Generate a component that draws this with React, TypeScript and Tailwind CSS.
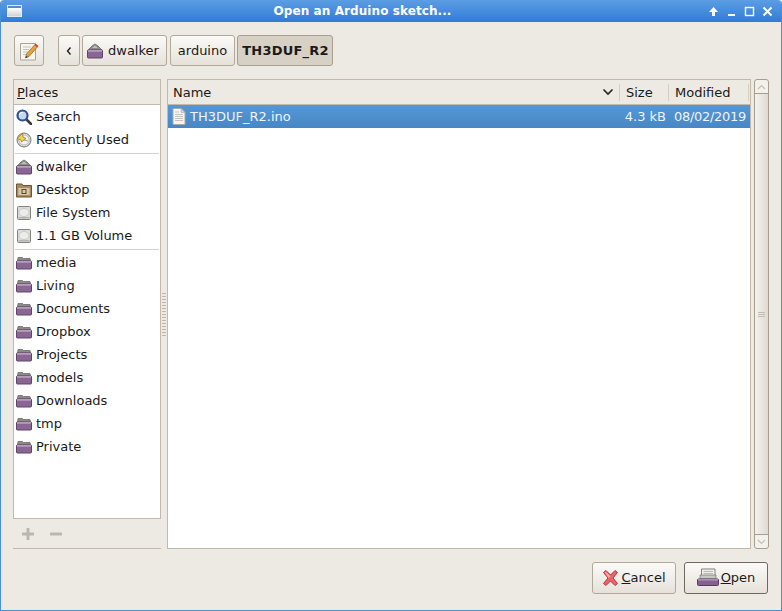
import React from 'react';

const FolderIcon = () => (
  <svg width="16" height="16" viewBox="0 0 16 16" className="shrink-0">
    <path d="M1.5 6 L2 2.5 H6.5 L7.5 3.5 H14 L14.5 6 Z" fill="#8c8a85" stroke="#6f6d69" strokeWidth="0.8" />
    <rect x="0.5" y="6" width="15" height="8" rx="0.8" fill="#8a6692" stroke="#5f4468" />
    <rect x="1" y="6" width="14" height="1.8" fill="#b79abd" />
  </svg>
);

const HomeIcon = () => (
  <svg width="16" height="16" viewBox="0 0 16 16" className="shrink-0">
    <path d="M1 7 L5 3 L8 1 L11 3 L15 7 Z" fill="#8b8a86" stroke="#6a6966" strokeWidth="0.8" />
    <path d="M5 5 L8 2.6 L11 5 Z" fill="#c2c1bc" />
    <rect x="0.5" y="7" width="15" height="8" rx="0.8" fill="#8a6692" stroke="#5f4468" />
    <rect x="1" y="7" width="14" height="1.8" fill="#b79abd" />
  </svg>
);

const SearchIcon = () => (
  <svg width="16" height="16" viewBox="0 0 16 16" className="shrink-0">
    <path d="M10 10 L15 15" stroke="#3a3a3a" strokeWidth="2.6" strokeLinecap="round" />
    <circle cx="6.5" cy="6.5" r="5" fill="#c9d6ec" stroke="#2f4f98" strokeWidth="2.2" />
    <path d="M3.5 6 A3 3 0 0 1 7 3.5" stroke="#ffffff" strokeWidth="1" fill="none" />
  </svg>
);

const RecentIcon = () => (
  <svg width="16" height="16" viewBox="0 0 16 16" className="shrink-0">
    <circle cx="8" cy="8" r="7" fill="#d8d7d0" stroke="#7c7b76" />
    <circle cx="8" cy="8" r="5" fill="#f4f3ef" stroke="#a9a8a2" strokeWidth="0.6" />
    <path d="M1 6.5 L6.5 1.5 L7 5 L10 6.5 L5.5 10 L5 8 Z" fill="#f0d24e" stroke="#8a7420" strokeWidth="0.7" />
    <path d="M8 8 L12 9" stroke="#8a8984" strokeWidth="0.8" />
  </svg>
);

const DesktopIcon = () => (
  <svg width="16" height="16" viewBox="0 0 16 16" className="shrink-0">
    <path d="M0.5 2 H6 L7 3.5 H15.5 V15 H0.5 Z" fill="#a98a60" stroke="#6d5433" />
    <rect x="2" y="5.5" width="12" height="8" fill="#d9c6a6" stroke="#9a7d55" strokeWidth="0.6" />
    <rect x="6" y="7.5" width="4" height="4" fill="none" stroke="#5f4a2c" strokeWidth="1" />
  </svg>
);

const DriveIcon = () => (
  <svg width="16" height="16" viewBox="0 0 16 16" className="shrink-0">
    <rect x="1.5" y="1.5" width="13" height="13" rx="1" fill="#d4d4d1" stroke="#85857f" />
    <rect x="2.5" y="2.5" width="11" height="11" fill="#dededb" />
    <ellipse cx="8" cy="7.5" rx="5" ry="4" fill="#ececea" stroke="#bcbcb8" strokeWidth="0.7" />
    <rect x="2.5" y="12" width="11" height="1.5" fill="#b4b4b0" />
  </svg>
);

const FileIcon = () => (
  <svg width="14" height="17" viewBox="0 0 14 17" className="shrink-0">
    <path d="M1 0.5 H9 L13 4.5 V16.5 H1 Z" fill="#f5f5f3" stroke="#a9a9a6" />
    <path d="M9 0.5 V4.5 H13 Z" fill="#d6d6d3" stroke="#a9a9a6" strokeWidth="0.6" />
    <path d="M3 4 H7 M3 6.5 H11 M3 8.5 H11 M3 10.5 H11 M3 12.5 H11" stroke="#c2c2bf" strokeWidth="1" />
  </svg>
);

const EditIcon = () => (
  <svg width="20" height="20" viewBox="0 0 20 20">
    <path d="M1.5 2.5 H16.5 V19 H1.5 Z" fill="#f7f6ee" stroke="#a5a49d" />
    <path d="M4 6 H12 M4 8.5 H10 M4 11 H9 M4 13.5 H8" stroke="#c3c2ba" strokeWidth="1" />
    <path d="M6.5 17 L7.5 13 L16 3.5 L18.5 5.8 L10 15.5 Z" fill="#e9a13b" stroke="#8e5f1a" strokeWidth="0.7" />
    <path d="M15.5 4 L16.5 2.5 L19.5 5 L18 6.3 Z" fill="#d5413a" />
    <path d="M6.5 17 L7.2 14.7 L8.7 16 Z" fill="#333" />
  </svg>
);

const CancelIcon = () => (
  <svg width="17" height="18" viewBox="0 0 17 18" className="shrink-0">
    <path
      d="M1.5 3.5 L4 1.5 L8.5 6 L13 1.5 L15.5 3.5 L11 9 L15.5 14.5 L13 16.5 L8.5 12 L4 16.5 L1.5 14.5 L6 9 Z"
      fill="#e8666a"
      stroke="#b8282e"
      strokeWidth="0.9"
    />
    <path d="M3 3.5 L4 2.8 L8.5 7.5 L6.5 9 Z" fill="#f4a9aa" />
  </svg>
);

const OpenIcon = () => (
  <svg width="22" height="19" viewBox="0 0 22 19" className="shrink-0">
    <path d="M4.5 1 H18 V10 H4.5 Z" fill="#f1f1ee" stroke="#7f7f7b" />
    <path d="M6.5 3.5 H16 M6.5 5.5 H16 M6.5 7.5 H16" stroke="#b8b8b4" strokeWidth="1" />
    <path d="M3 7 H19 V11 H3 Z" fill="#c7c7c3" stroke="#75756f" strokeWidth="0.7" />
    <rect x="0.5" y="11" width="21" height="6.5" rx="1" fill="#86608f" stroke="#553c60" />
    <rect x="1" y="11" width="20" height="1.6" fill="#ad91b3" />
  </svg>
);

const places: [React.ReactNode, string][][] = [
  [
    [<SearchIcon />, 'Search'],
    [<RecentIcon />, 'Recently Used'],
  ],
  [
    [<HomeIcon />, 'dwalker'],
    [<DesktopIcon />, 'Desktop'],
    [<DriveIcon />, 'File System'],
    [<DriveIcon />, '1.1 GB Volume'],
  ],
  [
    [<FolderIcon />, 'media'],
    [<FolderIcon />, 'Living'],
    [<FolderIcon />, 'Documents'],
    [<FolderIcon />, 'Dropbox'],
    [<FolderIcon />, 'Projects'],
    [<FolderIcon />, 'models'],
    [<FolderIcon />, 'Downloads'],
    [<FolderIcon />, 'tmp'],
    [<FolderIcon />, 'Private'],
  ],
];

const pathBtn =
  'h-[31px] flex items-center rounded-[3px] border border-[#b2a99a] bg-gradient-to-b from-[#fbfaf8] to-[#e6e2da]';

function App() {
  return (
    <div
      className="w-[782px] h-[611px] overflow-hidden flex flex-col border-x border-b border-[#4a90d9] rounded-t-[4px] bg-[#edeae3] text-[13px] leading-none text-[#1a1a1a]"
      style={{ fontFamily: '"DejaVu Sans", sans-serif' }}
    >
      {/* title bar */}
      <div className="h-[22px] shrink-0 -mx-px flex items-center bg-gradient-to-b from-[#5c9de3] to-[#2f7cd6] text-white">
        <div className="w-[15px] ml-[7px] h-[12px] flex flex-col border border-[#e4e9ee]">
          <div className="h-[2px] bg-[#5f86c4]" />
          <div className="flex-1 bg-gradient-to-b from-[#ffffff] to-[#cfd3d6]" />
        </div>
        <div className="flex-1 text-center font-bold text-[12px] tracking-[0.08px] pr-[5px]">Open an Arduino sketch...</div>
        <div className="flex items-center gap-[7px] mr-[9px]">
          <svg width="11" height="11" viewBox="0 0 11 11"><path d="M5.5 1 L10 6 H7 V10 H4 V6 H1 Z" fill="#fff" /></svg>
          <svg width="11" height="11" viewBox="0 0 11 11"><rect x="2" y="8" width="7" height="2" fill="#fff" /></svg>
          <svg width="11" height="11" viewBox="0 0 11 11"><rect x="1.5" y="1.5" width="8" height="8" fill="none" stroke="#fff" strokeWidth="1.4" /></svg>
          <svg width="11" height="11" viewBox="0 0 11 11"><path d="M1.5 1.5 L9.5 9.5 M9.5 1.5 L1.5 9.5" stroke="#fff" strokeWidth="2" /></svg>
        </div>
      </div>

      {/* path bar */}
      <div className="h-[57px] shrink-0 flex items-start pt-[13px] pl-[13px]">
        <div className={`${pathBtn} w-[30px] justify-center`}>
          <EditIcon />
        </div>
        <div className={`${pathBtn} w-[22px] justify-center ml-[14px]`}>
          <svg width="8" height="10" viewBox="0 0 8 10"><path d="M5.5 1.5 L2.5 5 L5.5 8.5" fill="none" stroke="#222" strokeWidth="1.4" /></svg>
        </div>
        <div className={`${pathBtn} w-[85px] ml-[2px] pl-[4px] gap-[5px]`}>
          <HomeIcon />
          <span>dwalker</span>
        </div>
        <div className={`${pathBtn} w-[65px] ml-[3px] justify-center`}>arduino</div>
        <div className="h-[31px] w-[96px] ml-[2px] pl-[1px] flex items-center justify-center rounded-[3px] border border-[#a89f90] bg-[#d6d0c5] font-bold tracking-[0.2px]">
          TH3DUF_R2
        </div>
      </div>

      {/* panes */}
      <div className="h-[470px] shrink-0 flex pl-[12px]">
        <div className="w-[148px] shrink-0 flex flex-col">
          <div className="h-[440px] flex flex-col border border-[#c3b9aa] bg-white">
            <div className="h-[25px] shrink-0 flex items-center pl-[3px] bg-[#edeae3] border-b border-[#c3b9aa]">
              <span><span className="underline">P</span>laces</span>
            </div>
            {places.map((group, i) => (
              <div key={i} className={i > 0 ? 'mt-[2px] border-t border-[#d8d2c8] mx-px pt-[1px]' : ''}>
                {group.map(([icon, label]) => (
                  <div key={label} className={`h-[23px] flex items-center gap-[4px] ${i > 0 ? 'pl-[1px]' : 'pl-[2px]'}`}>
                    {icon}
                    <span>{label}</span>
                  </div>
                ))}
              </div>
            ))}
          </div>
          <div className="h-[30px] flex items-center gap-[16px] pl-[9px] border-b border-[#c3b9aa]">
            <svg width="12" height="12" viewBox="0 0 12 12"><path d="M6 1 V11 M1 6 H11" stroke="#b9b7b2" strokeWidth="3" strokeLinecap="round" /></svg>
            <svg width="12" height="12" viewBox="0 0 12 12"><path d="M1 6 H11" stroke="#b9b7b2" strokeWidth="3" strokeLinecap="round" /></svg>
          </div>
        </div>

        {/* pane handle */}
        <div className="w-[6px] shrink-0 flex items-center justify-center">
          <div className="w-[4px] h-[44px] bg-[radial-gradient(#bdb6a9_0.7px,transparent_0.8px)] bg-[length:2px_3px]" />
        </div>

        <div className="w-[584px] shrink-0 flex flex-col border border-[#c3b9aa] bg-white">
          <div className="h-[25px] shrink-0 flex items-center bg-[#edeae3] border-b border-[#c3b9aa]">
            <div className="flex-1 h-[17px] flex items-center justify-between pl-[5px] pr-[5px] border-r border-[#d4cec3]">
              <span>Name</span>
              <svg width="12" height="10" viewBox="0 0 12 10"><path d="M1.5 2.5 L6 7 L10.5 2.5" fill="none" stroke="#222" strokeWidth="1.6" /></svg>
            </div>
            <div className="w-[49px] h-[17px] flex items-center pl-[6px] border-r border-[#d4cec3]">Size</div>
            <div className="w-[80px] h-[17px] flex items-center pl-[6px] border-r border-[#d4cec3] mr-[1px]">Modified</div>
          </div>
          <div className="h-[23px] shrink-0 flex items-center bg-gradient-to-b from-[#5597d5] to-[#4787c6] text-[#eef4fb]">
            <div className="flex-1 flex items-center gap-[4px] pl-[4px]">
              <FileIcon />
              <span>TH3DUF_R2.ino</span>
            </div>
            <div className="w-[50px] text-right">4.3 kB</div>
            <div className="w-[84px] text-right pr-[4px] tracking-[-0.3px]">08/02/2019</div>
          </div>
        </div>

        {/* scrollbar */}
        <div className="w-[15px] shrink-0 ml-[3px] flex flex-col rounded-[3px] border border-[#a79f8e] bg-[#dcd8cf]">
          <div className="h-[14px] shrink-0 flex items-center justify-center border-b border-[#a79f8e] bg-[#f3f1ec] rounded-t-[3px]">
            <svg width="9" height="6" viewBox="0 0 9 6"><path d="M1 5 L4.5 1.5 L8 5" fill="none" stroke="#c4bfb5" strokeWidth="1.2" /></svg>
          </div>
          <div className="flex-1 flex items-center justify-center bg-gradient-to-r from-[#f4f2ee] to-[#dfdbd3]">
            <div className="w-[7px] h-[5px] border-y border-[#c3bcb0] bg-[linear-gradient(#c3bcb0,#c3bcb0)] bg-[length:100%_1px] bg-center bg-no-repeat" />
          </div>
          <div className="h-[14px] shrink-0 flex items-center justify-center border-t border-[#a79f8e] bg-[#f3f1ec] rounded-b-[3px]">
            <svg width="9" height="6" viewBox="0 0 9 6"><path d="M1 1 L4.5 4.5 L8 1" fill="none" stroke="#c4bfb5" strokeWidth="1.2" /></svg>
          </div>
        </div>
      </div>

      {/* action buttons */}
      <div className="flex justify-end gap-[8px] pt-[13px] pr-[13px]">
        <div className="w-[84px] h-[32px] flex items-center justify-center gap-[2px] pb-[1px] rounded-[3px] border border-[#b2a99a] bg-gradient-to-b from-[#fbfaf8] to-[#e6e2da]">
          <CancelIcon />
          <span><span className="underline">C</span>ancel</span>
        </div>
        <div className="w-[84px] h-[32px] flex items-center justify-center gap-[2px] pb-[1px] rounded-[3px] border border-[#6e685e] bg-gradient-to-b from-[#fbfaf8] to-[#e6e2da]">
          <OpenIcon />
          <span><span className="underline">O</span>pen</span>
        </div>
      </div>
    </div>
  );
}

export default App;
